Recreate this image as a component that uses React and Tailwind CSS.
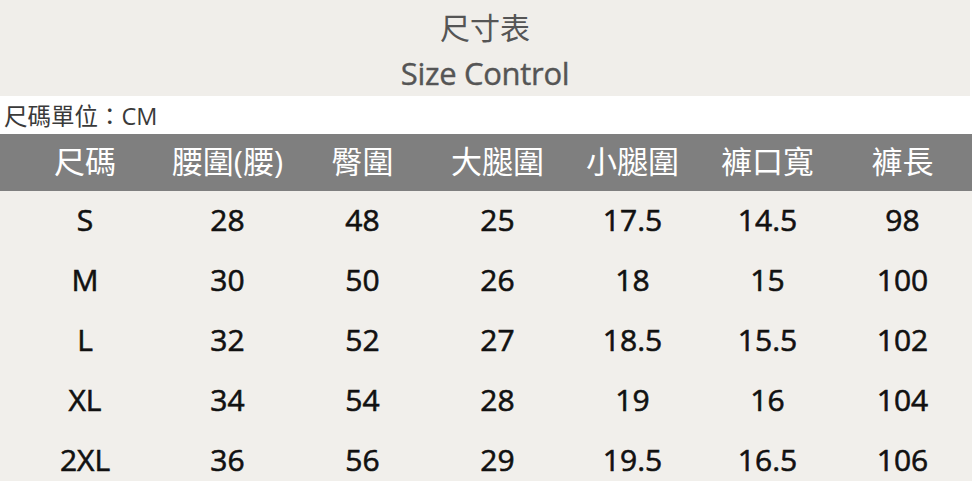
import React from 'react';

const headers = ['尺碼', '腰圍(腰)', '臀圍', '大腿圍', '小腿圍', '褲口寬', '褲長'];

const rows = [
  ['S', '28', '48', '25', '17.5', '14.5', '98'],
  ['M', '30', '50', '26', '18', '15', '100'],
  ['L', '32', '52', '27', '18.5', '15.5', '102'],
  ['XL', '34', '54', '28', '19', '16', '104'],
  ['2XL', '36', '56', '29', '19.5', '16.5', '106'],
];

const font = { fontFamily: '"Open Sans", "Noto Sans CJK TC", sans-serif' };

export default function App() {
  return (
    <div className="w-[972px] h-[481px] overflow-hidden bg-white" style={font}>
      <div className="w-[970px] h-[96px] bg-[#f0eeea] flex flex-col items-center text-[#555555]">
        <div className="text-[30px] leading-none mt-[13px]">尺寸表</div>
        <div className="text-[31px] leading-none mt-[15px] tracking-[-0.3px] [-webkit-text-stroke:0.4px_#555555]">Size Control</div>
      </div>
      <div className="h-[38px] flex items-center pl-[4px] pt-[3px] text-[23.5px] text-[#3a3a3a]">
        尺碼單位：CM
      </div>
      <div className="h-[57px] bg-[#7f7f7f] grid grid-cols-[150px_repeat(6,135px)] pl-[10px] items-center pb-[3px] text-white text-[31px]">
        {headers.map((h) => (
          <div key={h} className="text-center">{h}</div>
        ))}
      </div>
      <div className="bg-[#f1efeb] h-[290px]">
        {rows.map((r) => (
          <div key={r[0]} className="h-[60px] grid grid-cols-[150px_repeat(6,135px)] pl-[10px] items-center pb-[4px] text-[30px] text-[#111111] [-webkit-text-stroke:0.6px_#111111]">
            {r.map((c, i) => (
              <div key={i} className="text-center">{c}</div>
            ))}
          </div>
        ))}
      </div>
    </div>
  );
}
